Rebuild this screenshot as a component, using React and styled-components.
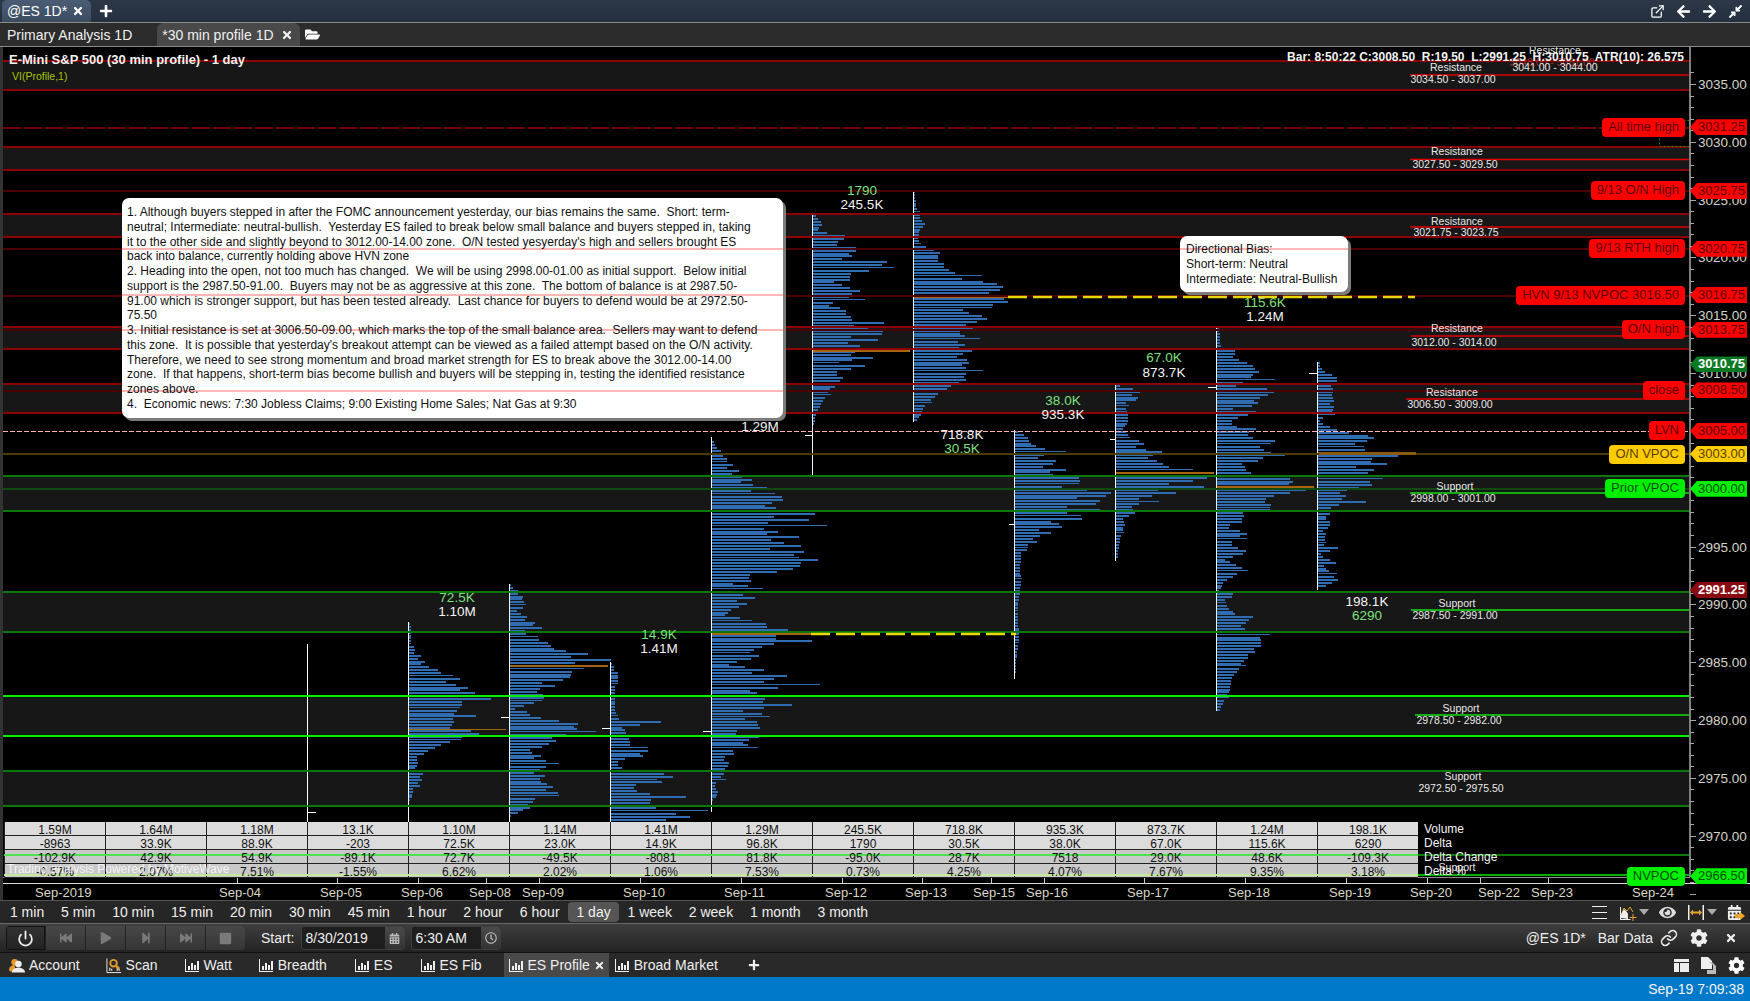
import React from "react"
import styled, { createGlobalStyle } from "styled-components"
import { FaCog, FaFolderOpen, FaArrowLeft, FaArrowRight, FaPlay, FaStop, FaStepForward, FaFastBackward, FaFastForward, FaEye, FaCompressAlt, FaRegClock, FaCalendarAlt, FaTimes, FaPlus } from "react-icons/fa"
import { Link as LinkIcon, Power, ExternalLink } from "lucide-react"

const CHART_TOP = 47
const priceY = (p) => 84 + (3035 - p) * 11.565

const GlobalStyle = createGlobalStyle`
  html, body { margin: 0; padding: 0; background: #000; }
  body { font-family: "Liberation Sans", Arial, sans-serif; overflow: hidden; }
`

const Page = styled.div`
  width: 1750px;
  height: 1001px;
  display: flex;
  flex-direction: column;
  color: #fff;
  background: #2a2a2a;
`

const TopBar = styled.div`
  height: 22px;
  flex: none;
  display: flex;
  align-items: center;
  background: linear-gradient(#2c3848, #243040);
  border-bottom: 1px solid #8a8a8a;
  font-size: 14px;
`

const TopTab = styled.div`
  width: 89px;
  height: 22px;
  margin-left: 2px;
  padding-left: 5px;
  box-sizing: border-box;
  display: flex;
  align-items: center;
  justify-content: space-between;
  padding-right: 7px;
  background: linear-gradient(#4a5d74, #3b4c61);
  border-radius: 5px 5px 0 0;
`

const TopIcons = styled.div`
  margin-left: auto;
  display: flex;
  align-items: center;
  gap: 11px;
  padding-right: 7px;
`

const SubBar = styled.div`
  height: 23px;
  flex: none;
  display: flex;
  align-items: flex-end;
  background: #2c2c2c;
  border-bottom: 1px solid #8a8a8a;
  font-size: 14px;
`

const SubTab = styled.div`
  height: 23px;
  display: flex;
  align-items: center;
  gap: 7px;
  box-sizing: border-box;
  padding: ${(p) => (p.$active ? "0 7px 0 5px" : "0 25px 0 7px")};
  background: ${(p) => (p.$active ? "#494949" : "transparent")};
  border-radius: 6px 6px 0 0;
  color: #efefef;
`

const ChartArea = styled.div`
  flex: 1;
  position: relative;
  overflow: hidden;
  background: #000;
`

const ChartSvg = styled.svg`
  position: absolute;
  left: 0;
  top: 0;
  display: block;
  font-family: "Liberation Sans", Arial, sans-serif;
`

const ChartTitle = styled.div`
  position: absolute;
  left: 9px;
  top: 5px;
  font-size: 13px;
  font-weight: 700;
  color: #f2f2f2;
`

const StudyName = styled.div`
  position: absolute;
  left: 12px;
  top: 23px;
  font-size: 10.5px;
  color: #a6c600;
`

const BarInfo = styled.div`
  position: absolute;
  right: 66px;
  top: 3px;
  font-size: 12px;
  font-weight: 700;
  color: #f2f2f2;
  white-space: pre;
`

const Note = styled.div`
  position: absolute;
  left: ${(p) => p.$x}px;
  top: ${(p) => p.$y - CHART_TOP}px;
  width: ${(p) => p.$w}px;
  height: ${(p) => p.$h}px;
  box-sizing: border-box;
  padding: ${(p) => p.$pad};
  background: #fff;
  border-radius: 7px;
  box-shadow: 3px 3px 0 #7c7c7c;
  color: #111;
  font-size: 12px;
  line-height: ${(p) => p.$lh}px;
  white-space: pre;
`

const NoteRule = styled.div`
  position: absolute;
  left: 0;
  right: 0;
  top: ${(p) => p.$top}px;
  height: 2px;
  background: #ffb6b6;
`

const NoteText = styled.div`
  position: relative;
`

const PriceTag = styled.div`
  position: absolute;
  left: 1690px;
  top: ${(p) => p.$y - CHART_TOP - 8}px;
  width: 57px;
  height: 16px;
  padding-left: 8px;
  box-sizing: border-box;
  clip-path: polygon(0 50%, 7px 0, 100% 0, 100% 100%, 7px 100%);
  background: ${(p) => p.$bg};
  color: ${(p) => p.$ink};
  font-size: 13px;
  line-height: 16px;
  font-weight: ${(p) => (p.$bold ? 700 : 400)};
  white-space: nowrap;
`

const LevelTag = styled.div`
  position: absolute;
  right: 65px;
  top: ${(p) => p.$y - CHART_TOP - 9.5}px;
  height: 19px;
  padding: 0 6px;
  border-radius: 4px;
  background: ${(p) => p.$bg};
  color: ${(p) => p.$ink};
  font-size: 13px;
  line-height: 18px;
  white-space: nowrap;
`

const DataTable = styled.div`
  position: absolute;
  left: 4px;
  top: 775px;
  display: grid;
  grid-template-columns: repeat(14, 101px) auto;
  grid-auto-rows: 14px;
`

const Cell = styled.div`
  background: ${(p) => (p.$dim ? "#c9c9c9" : "#dcdcdc")};
  border-left: 1px solid #222;
  border-bottom: 1px solid #222;
  box-sizing: border-box;
  font-size: 12px;
  line-height: 14px;
  text-align: center;
`

const CellText = styled.span`
  position: relative;
  top: 1px;
  z-index: 2;
  color: #111;
`

const RowName = styled.div`
  padding-left: 6px;
  font-size: 12px;
  line-height: 15px;
  color: #f2f2f2;
  white-space: nowrap;
`

const TableLine = styled.div`
  position: absolute;
  z-index: 1;
  left: 0;
  width: 1414px;
  top: ${(p) => p.$top}px;
  height: 2px;
  background: ${(p) => p.$color};
`

const Watermark = styled.div`
  position: absolute;
  z-index: 3;
  left: 3px;
  top: 40px;
  font-size: 12px;
  color: rgba(255, 255, 255, 0.82);
  white-space: nowrap;
`

const Timeframes = styled.div`
  height: 22px;
  flex: none;
  display: flex;
  align-items: center;
  padding-left: 1.5px;
  background: #262626;
  border-top: 1px solid #555;
  font-size: 14px;
`

const Frame = styled.div`
  height: 20px;
  line-height: 20px;
  padding: 0 8.45px;
  color: #eee;
  border-radius: 4px;
  background: ${(p) => (p.$active ? "#555" : "transparent")};
`

const FrameTools = styled.div`
  margin-left: auto;
  display: flex;
  align-items: center;
  padding-right: 5px;
`

const Tool = styled.div`
  display: flex;
  margin-left: ${(p) => p.$gap}px;
`

const ControlBar = styled.div`
  height: 28px;
  flex: none;
  display: flex;
  align-items: center;
  padding: 0 13px 0 6px;
  background: linear-gradient(#3e3e3e, #232323);
  border-top: 1px solid #6a6a6a;
  border-bottom: 1px solid #111;
  font-size: 14px;
`

const ButtonGroup = styled.div`
  display: flex;
  height: 24px;
  border-radius: 4px;
  overflow: hidden;
  background: #222;
  gap: 1px;
`

const PlayerButton = styled.div`
  width: 39px;
  display: flex;
  align-items: center;
  justify-content: center;
  color: ${(p) => (p.$on ? "#eee" : "#7a7a7a")};
  background: ${(p) => (p.$on ? "linear-gradient(#333, #222)" : "linear-gradient(#484848, #353535)")};
  box-shadow: ${(p) => (p.$on ? "inset 0 0 0 1px #111" : "none")};
`

const StartLabel = styled.div`
  margin: 0 7px 0 16px;
  color: #eee;
`

const FieldBox = styled.div`
  display: flex;
  height: 24px;
  width: ${(p) => p.$w}px;
  margin-right: 6px;
  border-radius: 3px;
  overflow: hidden;
  background: #1e1e1e;
  color: #eee;
  box-sizing: border-box;
  border: 1px solid #3d3d3d;
`

const FieldText = styled.div`
  flex: 1;
  line-height: 22px;
  padding-left: 3px;
`

const FieldButton = styled.div`
  width: 19px;
  display: flex;
  align-items: center;
  justify-content: center;
  background: linear-gradient(#4a4a4a, #333);
  color: #bbb;
`

const ControlRight = styled.div`
  margin-left: auto;
  display: flex;
  align-items: center;
  color: #eee;
`

const DockBar = styled.div`
  height: 24px;
  flex: none;
  display: flex;
  align-items: center;
  background: #292929;
  font-size: 14px;
`

const DockItem = styled.div`
  height: 24px;
  display: flex;
  align-items: center;
  gap: 4px;
  margin-left: ${(p) => p.$gap}px;
  padding: ${(p) => (p.$active ? "0 4px" : "0")};
  background: ${(p) => (p.$active ? "#4a4a4a" : "transparent")};
  color: #eee;
`

const DockTools = styled.div`
  margin-left: auto;
  display: flex;
  align-items: center;
  gap: 11px;
  padding-right: 5px;
`

const StatusBar = styled.div`
  height: 24px;
  flex: none;
  background: #0079cb;
  color: #f4f4f4;
  font-size: 14px;
  line-height: 24px;
  text-align: right;
  padding-right: 6px;
`

const LevelName = styled.text`
  fill: ${(p) => p.$fill || "#e8e8e8"};
  font-size: 10.5px;
  text-anchor: middle;
`

const AxisPrice = styled.text`
  fill: #d4d4c8;
  font-size: 13.5px;
`

const DateLabel = styled.text`
  fill: #d8d8c4;
  font-size: 13px;
`

const ProfileStat = styled.text`
  fill: ${(p) => (p.$green ? "#7fe07f" : "#f4f4f4")};
  font-size: 13.5px;
  text-anchor: middle;
`

// bars read off the reference as [y, length], y in zoom pixels from a given top
const z = (top, rows) => rows.map(([zy, len]) => [top + zy / 3, len])

const profiles = [
  { x: 408, top: 622, bottom: 835, noise: 0.3, poc: [728.5, 97, 1], close: [400, 826], pts: [[623, 1], [630, 3], [643, 2], [652, 7], [662, 15], [668, 25], [675, 40], [680, 45], [687, 50], [692, 68], [697, 75], [702, 68], [707, 55], [712, 40], [715, 58], [720, 40], [727, 53], [733, 55], [740, 40], [745, 25], [750, 15], [757, 10], [763, 6], [772, 10], [780, 15], [787, 6], [793, 4], [798, 3], [800, 0]] },
  { x: 509, top: 584, bottom: 835, noise: 0.2, poc: [665, 98, 2], close: [501, 717], pts: [[584, 1], [588, 5], [597, 13], [600, 17], [610, 8], [620, 20], [627, 28], [632, 12], [637, 20], [640, 35], [648, 52], [657, 78], [660, 88], [668, 62], [675, 55], [680, 43], [687, 35], [695, 30], [702, 25], [708, 5], [715, 27], [723, 58], [732, 55], [740, 50], [747, 25], [753, 25], [762, 33], [772, 28], [780, 33], [790, 44], [800, 25], [808, 20], [813, 5], [816, 0]] },
  { x: 610, top: 662, bottom: 835, noise: 0.25, close: [602, 728], pts: [[663, 1], [672, 6], [678, 6], [687, 3], [708, 5], [715, 5], [720, 8], [721, 80], [723, 27], [727, 8], [732, 15], [738, 15], [745, 15], [750, 45], [755, 28], [760, 8], [767, 10], [771, 25], [773, 75], [778, 35], [781, 43], [784, 30], [790, 30], [796, 65], [802, 30], [809, 60], [812, 65], [819, 70], [822, 30]] },
  { x: 711, top: 437, bottom: 812, noise: 0.25, poc: [633, 100, 2], close: [703, 731], pts: [[441, 2], [458, 12], [470, 22], [480, 35], [495, 55], [513, 85], [530, 65], [545, 75], [560, 85], [570, 60], [582, 25], [587, 48], [592, 23], [597, 35], [602, 30], [610, 12], [615, 17], [620, 40], [625, 70], [630, 78], [637, 75], [640, 88], [647, 60], [652, 37], [657, 40], [663, 20], [668, 43], [673, 48], [677, 73], [680, 62], [685, 68], [690, 40], [695, 57], [703, 70], [708, 38], [713, 45], [718, 28], [723, 40], [727, 50], [732, 18], [738, 52], [743, 28], [747, 44], [752, 20], [757, 12], [762, 20], [768, 10], [773, 10], [778, 12], [783, 3], [790, 6], [797, 4], [800, 1]] },
  { x: 812, top: 215, bottom: 477, noise: 0.06, poc: [350, 97, 2], close: [805, 435], pts: z(180, [[105, 3], [130, 10], [140, 6], [150, 5], [160, 19], [175, 30], [185, 22], [192, 23], [200, 42], [208, 42], [218, 34], [228, 39], [236, 29], [245, 77], [255, 72], [265, 55], [270, 55], [280, 36], [288, 40], [296, 38], [305, 20], [315, 30], [323, 37], [332, 48], [342, 35], [350, 33], [357, 39], [366, 17], [375, 17], [384, 30], [393, 32], [403, 36], [410, 40], [420, 37], [427, 75], [435, 38], [444, 60], [452, 56], [462, 67], [470, 35], [480, 78], [488, 27], [497, 52], [505, 45], [522, 40], [530, 57], [540, 33], [548, 20], [558, 62], [566, 30], [575, 22], [583, 25], [590, 32], [598, 27], [615, 22], [630, 16], [650, 12], [670, 8], [690, 4], [715, 2], [745, 0]]) },
  { x: 913, top: 191, bottom: 422, noise: 0.05, poc: [296.5, 97, 1], pts: z(180, [[33, 1], [50, 1], [62, 2], [88, 3], [98, 5], [107, 7], [115, 6], [123, 9], [132, 11], [141, 7], [150, 5], [158, 6], [167, 5], [177, 4], [186, 6], [193, 5], [201, 16], [210, 25], [218, 25], [227, 22], [237, 24], [245, 26], [254, 33], [263, 27], [271, 40], [279, 44], [288, 62], [296, 36], [305, 87], [314, 82], [323, 91], [332, 73], [341, 74], [357, 89], [366, 93], [375, 73], [384, 53], [393, 40], [402, 67], [410, 72], [420, 73], [427, 50], [435, 58], [444, 59], [452, 37], [462, 48], [470, 50], [480, 47], [488, 45], [497, 52], [505, 40], [513, 70], [522, 39], [530, 42], [540, 58], [548, 49], [558, 43], [566, 58], [575, 45], [583, 58], [590, 50], [598, 50], [610, 40], [630, 30], [660, 15], [690, 8], [720, 3]]) },
  { x: 1014, top: 430, bottom: 679, noise: 0.3, poc: [488, 98, 2], close: [1009, 524], pts: [[431, 2], [446, 28], [458, 33], [469, 40], [480, 56], [497, 83], [508, 67], [519, 50], [530, 33], [541, 17], [552, 7], [569, 5], [590, 4], [636, 3], [675, 1]] },
  { x: 1115, top: 383, bottom: 561, noise: 0.3, poc: [472, 98, 2], close: [1110, 439], pts: [[385, 5], [391, 25], [402, 15], [424, 8], [430, 6], [446, 28], [458, 45], [469, 67], [485, 72], [497, 33], [508, 17], [525, 6], [541, 3], [558, 1]] },
  { x: 1216, top: 326, bottom: 711, noise: 0.06, poc: [486, 97, 2], close: [1208, 387], pts: [...z(320, [[22, 2], [78, 4], [92, 18], [110, 15], [128, 30], [143, 38], [155, 40], [170, 32], [180, 50], [190, 12], [197, 20], [206, 62], [225, 46], [240, 38], [250, 46], [265, 15], [275, 34], [285, 30], [295, 17], [305, 14], [320, 22], [328, 46], [335, 28], [354, 40], [363, 61], [372, 35], [381, 46], [390, 52], [405, 66], [413, 47], [422, 38], [432, 20], [440, 32], [450, 28], [458, 38], [468, 57], [475, 85], [483, 70], [492, 78], [509, 95], [518, 68], [528, 52], [537, 42], [550, 52], [560, 38], [570, 54], [578, 20], [587, 30], [597, 24], [605, 27], [615, 7], [623, 14], [637, 32], [648, 22], [657, 25], [665, 12], [675, 16], [691, 31], [698, 25], [716, 8], [735, 20], [743, 25], [760, 20], [775, 10], [785, 6], [795, 5], [812, 2], [822, 21], [840, 6], [855, 10], [870, 15], [882, 20], [889, 36]]), [625, 25], [640, 48], [658, 28], [675, 17], [697, 9], [711, 2]] },
  { x: 1317, top: 362, bottom: 590, noise: 0.05, poc: [452, 98, 2], close: [1309, 373], pts: z(320, [[127, 2], [140, 2], [155, 8], [165, 18], [175, 18], [185, 18], [195, 13], [205, 15], [215, 15], [225, 14], [240, 15], [250, 12], [258, 18], [268, 13], [275, 13], [285, 12], [295, 2], [305, 2], [318, 12], [328, 20], [335, 30], [345, 50], [353, 55], [363, 46], [372, 35], [381, 38], [390, 54], [405, 77], [413, 55], [422, 50], [432, 74], [440, 35], [450, 65], [458, 44], [468, 40], [475, 50], [483, 52], [492, 57], [500, 42], [510, 25], [518, 20], [527, 28], [535, 24], [545, 54], [552, 21], [560, 13], [570, 18], [578, 12], [587, 8], [597, 8], [605, 13], [615, 13], [630, 5], [640, 8], [648, 7], [665, 6], [675, 6], [684, 25], [695, 3], [707, 4], [725, 18], [735, 5], [776, 20], [803, 3]]) },
]

const barLength = (pts, y, i, noise) => {
  for (let k = 0; k < pts.length - 1; k++) {
    const [y0, l0] = pts[k]
    const [y1, l1] = pts[k + 1]
    if (y >= y0 && y <= y1) {
      const len = l0 + ((l1 - l0) * (y - y0)) / (y1 - y0)
      const wobble = Math.sin(i * 12.9898 + len) * noise
      return len * (1 + wobble)
    }
  }
  return 0
}

const Profile = ({ x, top, bottom, pts, noise, poc, close }) => {
  const bars = []
  const start = pts[0][0]
  const end = pts[pts.length - 1][0]
  let i = 0
  for (let y = start; y <= end; y += 2.89) {
    const len = barLength(pts, y, i, noise)
    if (len >= 0.8) {
      const thin = i % 11 === 7
      const w = Math.round(thin ? len * 1.3 : len)
      bars.push(`M${x + 1} ${Math.round(y)}h${w}v${thin ? 1 : 2}h-${w}z`)
    }
    i++
  }
  return (
    <g>
      <path d={bars.join("")} fill="#2f6cb2" shapeRendering="crispEdges" />
      {poc && <rect x={x + 1} y={Math.round(poc[0])} width={poc[1]} height={poc[2]} fill="#a8650f" shapeRendering="crispEdges" />}
      <line x1={x + 0.5} x2={x + 0.5} y1={top} y2={bottom} stroke="#f2f6ff" />
      {close && <line x1={close[0]} x2={x} y1={close[1] + 0.5} y2={close[1] + 0.5} stroke="#fff" />}
    </g>
  )
}

const LEVELS_RED = [
  { name: "Resistance", range: "3034.50 - 3037.00", a: 61, mid: 75, b: 90, nameX: 1456, nameY: 71, rangeX: 1453, rangeY: 83, from: 1410 },
  { name: "Resistance", range: "3027.50 - 3029.50", a: 147, mid: 159.5, b: 170, nameX: 1457, nameY: 155, rangeX: 1455, rangeY: 168, from: 1410 },
  { name: "Resistance", range: "3021.75 - 3023.75", a: 214, mid: 227, b: 237, nameX: 1457, nameY: 225, rangeX: 1456, rangeY: 236, from: 1410 },
  { name: "Resistance", range: "3012.00 - 3014.00", a: 327, mid: 336, b: 349, nameX: 1457, nameY: 332, rangeX: 1454, rangeY: 346, from: 1411 },
  { name: "Resistance", range: "3006.50 - 3009.00", a: 384, mid: 399, b: 413, nameX: 1452, nameY: 396, rangeX: 1450, rangeY: 408, from: 1406 },
]

const LEVELS_GREEN = [
  { name: "Support", range: "2998.00 - 3001.00", a: 476, mid: 493, b: 511, nameX: 1455, nameY: 490, rangeX: 1453, rangeY: 502, from: 1410 },
  { name: "Support", range: "2987.50 - 2991.00", a: 592, mid: 610, b: 632, nameX: 1457, nameY: 607, rangeX: 1455, rangeY: 619, from: 1411 },
  { name: "Support", range: "2978.50 - 2982.00", a: 696, mid: 715, b: 736, nameX: 1461, nameY: 712, rangeX: 1459, rangeY: 724, from: 1415, bright: true },
  { name: "Support", range: "2972.50 - 2975.50", a: 771, mid: null, b: 806, nameX: 1463, nameY: 780, rangeX: 1461, rangeY: 792, from: 1415 },
]

const HAIRLINES = [191, 249, 296, 330, 391]

const DATES = [
  ["Sep-2019", 35], ["Sep-04", 219], ["Sep-05", 320], ["Sep-06", 401], ["Sep-08", 469], ["Sep-09", 522], ["Sep-10", 623], ["Sep-11", 724],
  ["Sep-12", 825], ["Sep-13", 905], ["Sep-15", 973], ["Sep-16", 1026], ["Sep-17", 1127], ["Sep-18", 1228], ["Sep-19", 1329], ["Sep-20", 1410],
  ["Sep-22", 1478], ["Sep-23", 1531], ["Sep-24", 1632],
]
const DATE_TICKS = [237, 337, 418, 486, 539, 640, 741, 842, 922, 991, 1044, 1144, 1245, 1346, 1427, 1480, 1548, 1649]

const STATS = [
  [457, 597, "72.5K", true], [457, 611, "1.10M"], [659, 634, "14.9K", true], [659, 648, "1.41M"], [760, 426, "1.29M"],
  [862, 190, "1790", true], [862, 204, "245.5K"], [962, 434, "718.8K"], [962, 448, "30.5K", true], [1063, 400, "38.0K", true],
  [1063, 414, "935.3K"], [1164, 357, "67.0K", true], [1164, 372, "873.7K"], [1265, 302, "115.6K", true], [1265, 316, "1.24M"],
  [1367, 601, "198.1K"], [1367, 615, "6290", true],
]

const RED = ["#ff0000", "#5c0000"]
const TAGS = [
  [3031.25, "All time high", RED], [3025.75, "9/13 O/N High", RED], [3020.75, "9/13 RTH high", RED], [3016.75, "HVN 9/13 NVPOC 3016.50", RED],
  [3013.75, "O/N high", RED], [3008.5, "close", RED], [3005, "LVN", RED], [3003, "O/N VPOC", ["#ffcc00", "#5a3e00"]],
  [3000, "Prior VPOC", ["#00ee00", "#005200"]], [2966.5, "NVPOC", ["#00ee00", "#005200"]],
]

const TABLE = [
  ["Volume", ["1.59M", "1.64M", "1.18M", "13.1K", "1.10M", "1.14M", "1.41M", "1.29M", "245.5K", "718.8K", "935.3K", "873.7K", "1.24M", "198.1K"]],
  ["Delta", ["-8963", "33.9K", "88.9K", "-203", "72.5K", "23.0K", "14.9K", "96.8K", "1790", "30.5K", "38.0K", "67.0K", "115.6K", "6290"]],
  ["Delta Change", ["-102.9K", "42.9K", "54.9K", "-89.1K", "72.7K", "-49.5K", "-8081", "81.8K", "-95.0K", "28.7K", "7518", "29.0K", "48.6K", "-109.3K"]],
  ["Delta %", ["-0.57%", "2.07%", "7.51%", "-1.55%", "6.62%", "2.02%", "1.06%", "7.53%", "0.73%", "4.25%", "4.07%", "7.67%", "9.35%", "3.18%"]],
]

const NOTE_LINES = `1. Although buyers stepped in after the FOMC announcement yesterday, our bias remains the same.  Short: term-
neutral; Intermediate: neutral-bullish.  Yesterday ES failed to break below small balance and buyers stepped in, taking
it to the other side and slightly beyond to 3012.00-14.00 zone.  O/N tested yesyerday's high and sellers brought ES
back into balance, currently holding above HVN zone
2. Heading into the open, not too much has changed.  We will be using 2998.00-01.00 as initial support.  Below initial
support is the 2987.50-91.00.  Buyers may not be as aggressive at this zone.  The bottom of balance is at 2987.50-
91.00 which is stronger support, but has been tested already.  Last chance for buyers to defend would be at 2972.50-
75.50
3. Initial resistance is set at 3006.50-09.00, which marks the top of the small balance area.  Sellers may want to defend
this zone.  It is possible that yesterday's breakout attempt can be viewed as a failed attempt based on the O/N activity.
Therefore, we need to see strong momentum and broad market strength for ES to break above the 3012.00-14.00
zone.  If that happens, short-term bias become bullish and buyers will be stepping in, testing the identified resistance
zones above.
4.  Economic news: 7:30 Jobless Claims; 9:00 Existing Home Sales; Nat Gas at 9:30`

const FRAMES = ["1 min", "5 min", "10 min", "15 min", "20 min", "30 min", "45 min", "1 hour", "2 hour", "6 hour", "1 day", "1 week", "2 week", "1 month", "3 month"]

const Chart = () => {
  const axis = []
  for (let p = 3036; p >= 2965; p--) {
    const y = Math.round(priceY(p)) + 0.5
    axis.push(<line key={p} x1={1690} x2={p % 5 === 0 ? 1696 : 1694} y1={y} y2={y} stroke="#aaa" />)
  }
  const bands = [...LEVELS_RED, ...LEVELS_GREEN]
  return (
    <ChartSvg width="1750" height="853" viewBox={`0 ${CHART_TOP} 1750 853`}>
      <rect x="0" y={CHART_TOP} width="3" height="853" fill="#333" />
      {bands.map((l) => (
        <rect key={l.range} x="3" y={l.a} width="1686" height={l.b - l.a} fill="#171717" />
      ))}
      <line x1="307.5" x2="307.5" y1="644" y2="835" stroke="#fff" />
      <line x1="307" x2="316" y1="812.5" y2="812.5" stroke="#fff" />
      {profiles.map((p) => <Profile key={p.x} {...p} />)}

      {HAIRLINES.map((y) => <line key={y} x1="3" x2="1689" y1={y} y2={y} stroke="#4c0000" strokeWidth="2" />)}
      <line x1="3" x2="1689" y1="489" y2="489" stroke="#0f4a0f" strokeWidth="2" />
      <line x1="3" x2="1689" y1="454" y2="454" stroke="#4a3c00" strokeWidth="2" />
      {LEVELS_RED.map((l) => (
        <g key={l.range}>
          <line x1="3" x2="1689" y1={l.a} y2={l.a} stroke="#8c0000" strokeWidth="2" />
          <line x1="3" x2="1689" y1={l.b} y2={l.b} stroke="#8c0000" strokeWidth="2" />
          <line x1={l.from} x2="1689" y1={l.mid} y2={l.mid} stroke="#e00000" strokeWidth="1.5" />
        </g>
      ))}
      {LEVELS_GREEN.map((l) => (
        <g key={l.range}>
          <line x1="3" x2="1689" y1={l.a} y2={l.a} stroke={l.bright ? "#00f000" : "#0a780a"} strokeWidth="2" />
          <line x1="3" x2="1689" y1={l.b} y2={l.b} stroke={l.bright ? "#00f000" : "#0a780a"} strokeWidth="2" />
          {l.mid && <line x1={l.from} x2="1689" y1={l.mid} y2={l.mid} stroke="#10e010" strokeWidth="1.5" />}
        </g>
      ))}
      <line x1="1418" x2="1689" y1="855" y2="855" stroke="#0a780a" strokeWidth="2" />
      <line x1="1410" x2="1689" y1="875" y2="875" stroke="#00e800" strokeWidth="1.5" />

      <line x1="3" x2="1689" y1="128" y2="128" stroke="#e80000" strokeDasharray="18 3" />
      <line x1="3" x2="1689" y1="431.5" y2="431.5" stroke="#ffb0b0" strokeDasharray="5 2" />
      <line x1="1008" x2="1415" y1="297" y2="297" stroke="#e8d800" strokeWidth="2.5" strokeDasharray="19 6" />
      <line x1="811" x2="1016" y1="634" y2="634" stroke="#e8d800" strokeWidth="2.5" strokeDasharray="19 6" />
      <rect x="1319" y="452" width="97" height="3" fill="#8a5a10" />
      <rect x="1659.5" y="120.5" width="30" height="26" fill="none" stroke="#0a8a0a" strokeDasharray="2 2" />

      {bands.map((l) => (
        <g key={l.range}>
          <LevelName x={l.nameX} y={l.nameY}>{l.name}</LevelName>
          <LevelName x={l.rangeX} y={l.rangeY}>{l.range}</LevelName>
        </g>
      ))}
      <LevelName x="1555" y="54">Resistance</LevelName>
      <LevelName x="1552" y="66" $fill="#a03030">3048.00 - 3051.00</LevelName>
      <LevelName x="1555" y="71">3041.00 - 3044.00</LevelName>
      <LevelName x="1457" y="871">Support</LevelName>

      {STATS.map(([x, y, text, green]) => (
        <ProfileStat key={text + x} x={x} y={y + 5} $green={green}>{text}</ProfileStat>
      ))}

      <line x1="1690" x2="1690" y1={CHART_TOP} y2="877" stroke="#aaa" strokeWidth="1.5" />
      {axis}
      {Array.from({ length: 14 }, (_, i) => 3035 - i * 5).map((p) => (
        <AxisPrice key={p} x="1698" y={priceY(p) + 5}>{p.toFixed(2)}</AxisPrice>
      ))}

      <line x1="3" x2="1690" y1="877.5" y2="877.5" stroke="#8c8c8c" />
      <line x1="3" x2="1750" y1="883.5" y2="883.5" stroke="#d8d8d8" />
      {DATE_TICKS.map((x) => <line key={x} x1={x + 0.5} x2={x + 0.5} y1="878" y2="883" stroke="#ccc" />)}
      {DATES.map(([label, x]) => <DateLabel key={label} x={x} y="897">{label}</DateLabel>)}
    </ChartSvg>
  )
}

const BarsIcon = () => (
  <svg width="16" height="15" viewBox="0 0 16 15" fill="#eee">
    <path d="M1 1h1v12h13v1H1z" />
    <rect x="4" y="8" width="2" height="4" /><rect x="7" y="5" width="2" height="7" />
    <rect x="10" y="7" width="2" height="5" /><rect x="13" y="3" width="2" height="9" />
  </svg>
)

const AccountIcon = () => (
  <svg width="16" height="17" viewBox="0 0 17 17">
    <circle cx="6" cy="5" r="3.5" fill="#e39a2a" /><path d="M0 13c0-3 3-5 6-5l1 7H1z" fill="#e39a2a" />
    <circle cx="10" cy="7" r="3.5" fill="#eee" /><path d="M3 16c0-3 3-5 7-5s7 2 7 5z" fill="#eee" />
  </svg>
)

const ScanIcon = () => (
  <svg width="16" height="17" viewBox="0 0 17 17" fill="none">
    <path d="M1 1v15h15" stroke="#eee" />
    <path d="M4 14v-3M6 14v-2M12 14v-4M14 14v-2" stroke="#ccc" strokeWidth="1.5" />
    <circle cx="8" cy="6" r="3.500" stroke="#e39a2a" strokeWidth="2" />
    <path d="M10.500 8.500l3.500 3.500" stroke="#e39a2a" strokeWidth="2.500" />
  </svg>
)

const ColumnsIcon = () => (
  <svg width="15" height="15" viewBox="0 0 15 15" fill="#eee"><path d="M0 1h15v3H0zM0 5h5v9H0zM6 5h9v9H6z" /></svg>
)

const PagesIcon = () => (
  <svg width="17" height="17" viewBox="0 0 17 17" fill="#eee">
    <path d="M1 0h7l4 4v8H1z" /><path d="M9 5h3l4 4v8H7v-4h6V8z" fill="#bbb" />
  </svg>
)

const HamburgerIcon = () => (
  <svg width="15" height="15" viewBox="0 0 15 15" stroke="#eee"><path d="M0 1.500h15M0 7.500h15M0 13.500h15" /></svg>
)

const MountainIcon = () => (
  <svg width="18" height="17" viewBox="0 0 18 17" fill="none">
    <path d="M1.500 16V3" stroke="#eee" /><path d="M1.500 15.500h10" stroke="#eee" />
    <path d="M2 11l3-7 3 3 3-4 3 5" stroke="#e8a030" />
    <path d="M2 14V11l3-6 3 3 1 2v5z" fill="#eee" />
    <path d="M14 10v7M10.500 13.500h7" stroke="#e8a030" />
  </svg>
)

const Dropdown = () => (
  <svg width="10" height="6" viewBox="0 0 10 6" fill="#aaa"><path d="M0 0h10L5 6z" /></svg>
)

const WidthIcon = () => (
  <svg width="18" height="15" viewBox="0 0 18 15" fill="#eba52c">
    <path d="M1 0h1.500v15H1zM15.500 0H17v15h-1.500z" fill="#eee" />
    <path d="M3 7.500l3-3v2h6v-2l3 3-3 3v-2H6v2z" />
  </svg>
)

const CalendarWrap = styled.div`
  position: relative;
  display: flex;
  width: 18px;
`

const CalendarNudge = styled.svg`
  position: absolute;
  right: 0;
  bottom: 0;
`

const CalendarArrow = () => (
  <CalendarWrap>
    <FaCalendarAlt size={15} color="#eee" />
    <CalendarNudge width="10" height="8" viewBox="0 0 10 8" fill="#eba52c"><path d="M0 2h5V0l5 4-5 4V6H0z" /></CalendarNudge>
  </CalendarWrap>
)

const PlusGap = styled.div`
  display: flex;
  margin-left: 8px;
`

const FolderGap = styled.div`
  display: flex;
  margin: 0 0 4px 5px;
`

const TextGap = styled.span`
  display: flex;
  margin-left: ${(p) => p.$gap}px;
`

const App = () => (
  <Page>
    <GlobalStyle />
    <TopBar>
      <TopTab>@ES 1D* <FaTimes size={12} /></TopTab>
      <PlusGap><FaPlus size={14} /></PlusGap>
      <TopIcons>
        <ExternalLink size={15} strokeWidth={2} />
        <FaArrowLeft size={15} />
        <FaArrowRight size={15} />
        <FaCompressAlt size={15} />
      </TopIcons>
    </TopBar>
    <SubBar>
      <SubTab>Primary Analysis 1D</SubTab>
      <SubTab $active>*30 min profile 1D <FaTimes size={12} /></SubTab>
      <FolderGap><FaFolderOpen size={15} /></FolderGap>
    </SubBar>
    <ChartArea>
      <Chart />
      <ChartTitle>E-Mini S&amp;P 500 (30 min profile) - 1 day</ChartTitle>
      <StudyName>VI(Profile,1)</StudyName>
      <BarInfo>Bar: 8:50:22 C:3008.50  R:19.50  L:2991.25  H:3010.75  ATR(10): 26.575</BarInfo>

      <Note $x={122} $y={198} $w={661} $h={220} $pad="7px 5px" $lh={14.75}>
        <NoteRule $top={50} />
        <NoteRule $top={96} />
        <NoteRule $top={131} />
        <NoteRule $top={192} />
        <NoteText>{NOTE_LINES}</NoteText>
      </Note>
      <Note $x={1180} $y={236} $w={168} $h={56} $pad="6px 6px" $lh={15}>
        <NoteRule $top={12} />
        <NoteText>{"Directional Bias:\nShort-term: Neutral\nIntermediate: Neutral-Bullish"}</NoteText>
      </Note>

      <DataTable>
        {TABLE.map(([name, values], r) => (
          <React.Fragment key={name}>
            {values.map((v, c) => <Cell key={c} $dim={r > 1}><CellText>{v}</CellText></Cell>)}
            <RowName>{name}</RowName>
          </React.Fragment>
        ))}
        <TableLine $top={32} $color="#4fe04f" />
        <TableLine $top={52} $color="#c4e89c" />
        <Watermark>Trading analysis Powered by MotiveWave</Watermark>
      </DataTable>

      {TAGS.map(([price, label, [bg, ink]]) => (
        <React.Fragment key={price}>
          <LevelTag $y={priceY(price)} $bg={bg} $ink={ink}>{label}</LevelTag>
          <PriceTag $y={priceY(price)} $bg={bg} $ink={ink}>{price.toFixed(2)}</PriceTag>
        </React.Fragment>
      ))}
      <PriceTag $y={priceY(3010.75)} $bg="#0a7a22" $ink="#fff" $bold>3010.75</PriceTag>
      <PriceTag $y={priceY(2991.25)} $bg="#8a0a14" $ink="#fff" $bold>2991.25</PriceTag>
    </ChartArea>
    <Timeframes>
      {FRAMES.map((f) => <Frame key={f} $active={f === "1 day"}>{f}</Frame>)}
      <FrameTools>
        <Tool $gap={0}><HamburgerIcon /></Tool>
        <Tool $gap={12}><MountainIcon /></Tool>
        <Tool $gap={2}><Dropdown /></Tool>
        <Tool $gap={10}><FaEye size={17} color="#ddd" /></Tool>
        <Tool $gap={11}><WidthIcon /></Tool>
        <Tool $gap={2}><Dropdown /></Tool>
        <Tool $gap={10}><CalendarArrow /></Tool>
      </FrameTools>
    </Timeframes>
    <ControlBar>
      <ButtonGroup>
        <PlayerButton $on><Power size={17} strokeWidth={2.5} /></PlayerButton>
        <PlayerButton><FaFastBackward size={12} /></PlayerButton>
        <PlayerButton><FaPlay size={12} /></PlayerButton>
        <PlayerButton><FaStepForward size={12} /></PlayerButton>
        <PlayerButton><FaFastForward size={12} /></PlayerButton>
        <PlayerButton><FaStop size={13} /></PlayerButton>
      </ButtonGroup>
      <StartLabel>Start:</StartLabel>
      <FieldBox $w={104}><FieldText>8/30/2019</FieldText><FieldButton><FaCalendarAlt size={11} /></FieldButton></FieldBox>
      <FieldBox $w={90}><FieldText>6:30 AM</FieldText><FieldButton><FaRegClock size={12} /></FieldButton></FieldBox>
      <ControlRight>
        @ES 1D*
        <TextGap $gap={12}>Bar Data</TextGap>
        <TextGap $gap={7}><LinkIcon size={18} /></TextGap>
        <TextGap $gap={12}><FaCog size={18} /></TextGap>
        <TextGap $gap={17}><FaTimes size={12} /></TextGap>
      </ControlRight>
    </ControlBar>
    <DockBar>
      <DockItem $gap={9}><AccountIcon />Account</DockItem>
      <DockItem $gap={26}><ScanIcon />Scan</DockItem>
      <DockItem $gap={26}><BarsIcon />Watt</DockItem>
      <DockItem $gap={26}><BarsIcon />Breadth</DockItem>
      <DockItem $gap={27}><BarsIcon />ES</DockItem>
      <DockItem $gap={27}><BarsIcon />ES Fib</DockItem>
      <DockItem $gap={22} $active><BarsIcon />ES Profile <FaTimes size={11} /></DockItem>
      <DockItem $gap={5}><BarsIcon />Broad Market</DockItem>
      <DockItem $gap={30}><FaPlus size={12} /></DockItem>
      <DockTools>
        <ColumnsIcon />
        <PagesIcon />
        <FaCog size={17} />
      </DockTools>
    </DockBar>
    <StatusBar>Sep-19 7:09:38</StatusBar>
  </Page>
)

export default App
